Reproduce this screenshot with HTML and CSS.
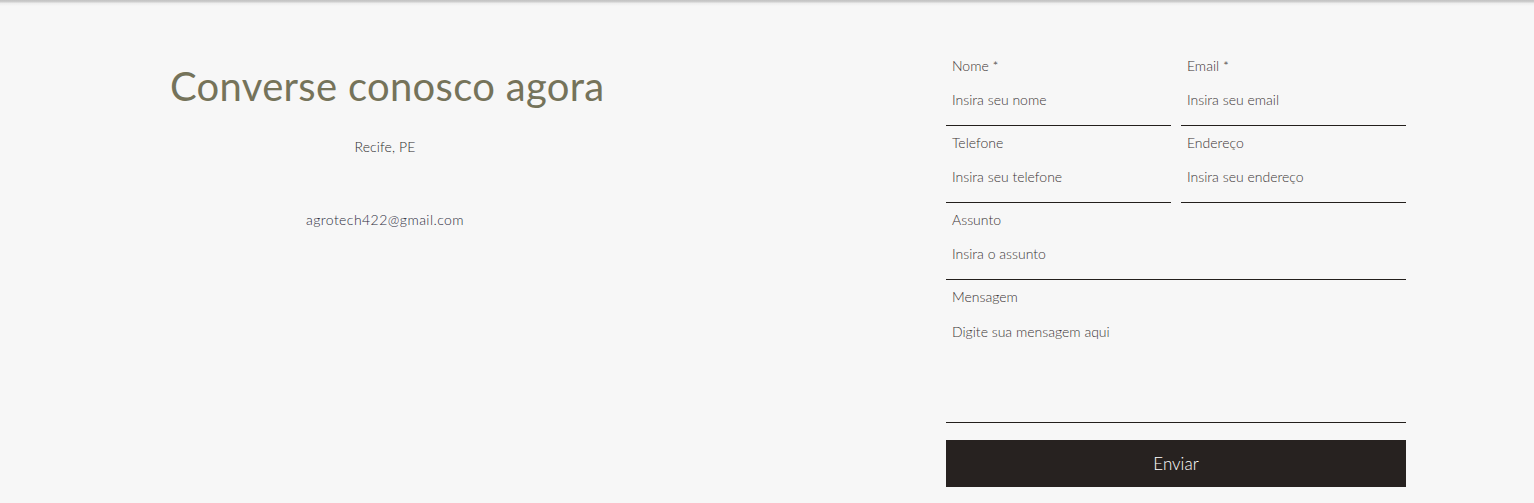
FILE: index.html
```html
<!DOCTYPE html>
<html lang="pt">
<head>
<meta charset="utf-8">
<title>Contato</title>
<link rel="stylesheet" href="styles.css">
</head>
<body>
<div class="topbar"></div>
<main class="contact">
  <section class="info">
    <h1 class="title">Converse conosco agora</h1>
    <p class="city">Recife, PE</p>
    <p class="mail">agrotech422@gmail.com</p>
  </section>
  <form class="form">
    <label class="field">
      <span class="label">Nome *</span>
      <input class="input" type="text" placeholder="Insira seu nome">
    </label>
    <label class="field">
      <span class="label">Email *</span>
      <input class="input" type="email" placeholder="Insira seu email">
    </label>
    <label class="field">
      <span class="label">Telefone</span>
      <input class="input" type="text" placeholder="Insira seu telefone">
    </label>
    <label class="field">
      <span class="label">Endereço</span>
      <input class="input" type="text" placeholder="Insira seu endereço">
    </label>
    <label class="field wide">
      <span class="label">Assunto</span>
      <input class="input" type="text" placeholder="Insira o assunto">
    </label>
    <label class="field wide message">
      <span class="label">Mensagem</span>
      <textarea class="input area" placeholder="Digite sua mensagem aqui"></textarea>
    </label>
    <button class="send" type="button">Enviar</button>
  </form>
</main>
</body>
</html>
```

FILE: styles.css
```css
* { box-sizing: border-box; }
html, body {
  margin: 0;
  background: #f7f7f7;
  font-family: "Lato", "Liberation Sans", sans-serif;
  font-weight: 300;
  color: #2e2e2e;
}
.topbar {
  height: 6px;
  background: linear-gradient(#c2c2c2 0, #cfcfcf 2px, #ececec 3px, #f7f7f7 6px);
}
.contact {
  display: flex;
  padding-left: 170px;
  gap: 346px;
  height: 497px;
}
.info {
  width: 430px;
  text-align: center;
}
.title {
  margin: 56px 0 0;
  font-size: 40px;
  line-height: 48px;
  font-weight: 400;
  color: #75735a;
  letter-spacing: 0.3px;
  white-space: nowrap;
}
.city {
  margin: 27px 0 0;
  font-size: 14px;
  line-height: 20px;
  letter-spacing: 0.1px;
}
.mail {
  margin: 53px 0 0;
  font-size: 14px;
  line-height: 20px;
  letter-spacing: 0.45px;
  color: #2c2c3c;
}
.form {
  width: 460px;
  margin-top: 43px;
  display: grid;
  grid-template-columns: 225px 225px;
  column-gap: 10px;
  align-content: start;
}
.field {
  display: flex;
  flex-direction: column;
  height: 77px;
  border-bottom: 1px solid #231f1c;
  padding: 7px 6px 0;
}
.wide { grid-column: 1 / 3; }
.message { height: 143px; }
.label {
  font-size: 14px;
  line-height: 20px;
  color: #3a3333;
}
.input {
  margin-top: 14px;
  border: 0;
  padding: 0;
  background: transparent;
  font-family: inherit;
  font-weight: 300;
  font-size: 14px;
  line-height: 20px;
  height: 20px;
  color: #333;
  outline: none;
}
.area { resize: none; height: 80px; margin-top: 15px; }
.input::placeholder { color: #3b3636; opacity: 1; }
.send {
  grid-column: 1 / 3;
  margin-top: 17px;
  height: 47px;
  border: 0;
  background: #272220;
  color: #fff;
  font-family: inherit;
  font-weight: 300;
  font-size: 17px;
}
```
